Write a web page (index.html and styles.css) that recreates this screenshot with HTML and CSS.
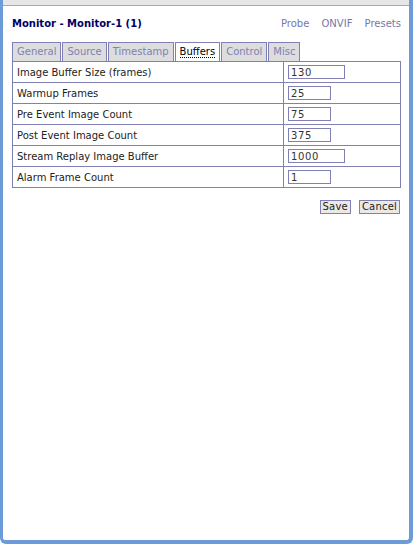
FILE: index.html
```html
<!DOCTYPE html>
<html lang="en">
<head>
  <meta charset="UTF-8" />
  <title>ZM - Monitor - Monitor-1</title>
  <link rel="stylesheet" href="styles.css">
</head>
<body>
  <div id="page">
    <div id="topbar"></div>
    <div id="content">
      <div id="header">
        <h2>Monitor - Monitor-1 (1)</h2>
        <div class="links">
          <a href="#">Probe</a>
          <a href="#">ONVIF</a>
          <a href="#">Presets</a>
        </div>
      </div>

      <ul class="tabs">
        <li><a href="#">General</a></li>
        <li><a href="#">Source</a></li>
        <li><a href="#">Timestamp</a></li>
        <li class="active"><a href="#">Buffers</a></li>
        <li><a href="#">Control</a></li>
        <li><a href="#">Misc</a></li>
      </ul>

      <table class="buffers">
        <tr>
          <td class="label">Image Buffer Size (frames)</td>
          <td><input type="text" class="wide" value="130"></td>
        </tr>
        <tr>
          <td class="label">Warmup Frames</td>
          <td><input type="text" class="narrow" value="25"></td>
        </tr>
        <tr>
          <td class="label">Pre Event Image Count</td>
          <td><input type="text" class="narrow" value="75"></td>
        </tr>
        <tr>
          <td class="label">Post Event Image Count</td>
          <td><input type="text" class="narrow" value="375"></td>
        </tr>
        <tr>
          <td class="label">Stream Replay Image Buffer</td>
          <td><input type="text" class="wide" value="1000"></td>
        </tr>
        <tr>
          <td class="label">Alarm Frame Count</td>
          <td><input type="text" class="narrow" value="1"></td>
        </tr>
      </table>

      <div class="actions">
        <button>Save</button>
        <button>Cancel</button>
      </div>
    </div>
  </div>
</body>
</html>
```

FILE: styles.css
```css
html, body {
  margin: 0;
  padding: 0;
  height: 100%;
}
body {
  font-family: 'DejaVu Sans', Verdana, sans-serif;
  font-size: 10px;
  color: #333;
  background: #fff;
}
#page {
  box-sizing: border-box;
  height: 544px;
  border-left: 3px solid #6c9bd7;
  border-right: 4px solid #6c9bd7;
  border-bottom: 4px solid #6c9bd7;
  border-radius: 0 0 6px 6px;
  background: #fff;
}
#topbar {
  height: 5px;
  background: #e6e6e6;
  border-bottom: 1px solid #aaaaaa;
}
#content {
  padding: 0 8px 0 9px;
}
#header {
  display: flex;
  justify-content: space-between;
  align-items: baseline;
  padding-top: 12px;
  height: 24px;
}
#header h2 {
  margin: 0;
  font-size: 10px;
  font-weight: bold;
  color: #000066;
}
.links a {
  color: #7777aa;
  text-decoration: none;
  margin-left: 9px;
}
.tabs {
  list-style: none;
  margin: 0;
  padding: 0;
  display: flex;
  gap: 1px;
}
.tabs li {
  box-sizing: border-box;
  height: 19px;
  border: 1px solid #8080b4;
  border-bottom: none;
  background: #dddddd;
  padding: 0 4px;
  line-height: 18px;
}
.tabs a {
  color: #8080b4;
  text-decoration: none;
}
.tabs li.active {
  background: #fff;
}
.tabs li.active a {
  color: #000;
  border-bottom: 1px dotted #000;
}
table.buffers {
  width: 100%;
  border-collapse: collapse;
}
table.buffers td {
  border: 1px solid #8080b4;
  height: 20px;
  padding: 0 4px;
  vertical-align: middle;
  color: #222;
}
table.buffers td.label {
  width: 262px;
}
table.buffers input {
  box-sizing: border-box;
  height: 14px;
  border: 1px solid #8080b4;
  padding: 0 2px;
  font-family: 'DejaVu Sans', Verdana, sans-serif;
  font-size: 10px;
  letter-spacing: 0.6px;
  color: #333;
  display: block;
}
input.wide { width: 57px; }
input.narrow { width: 43px; }
.actions {
  display: flex;
  justify-content: flex-end;
  gap: 8px;
  margin-top: 12px;
  padding-right: 1px;
}
.actions button {
  height: 14px;
  padding: 0 2px;
  border: 1px solid #8080b4;
  background: #ece9e4;
  font-family: 'DejaVu Sans', Verdana, sans-serif;
  font-size: 10px;
  letter-spacing: 0.2px;
  color: #222;
  line-height: 12px;
}
```
